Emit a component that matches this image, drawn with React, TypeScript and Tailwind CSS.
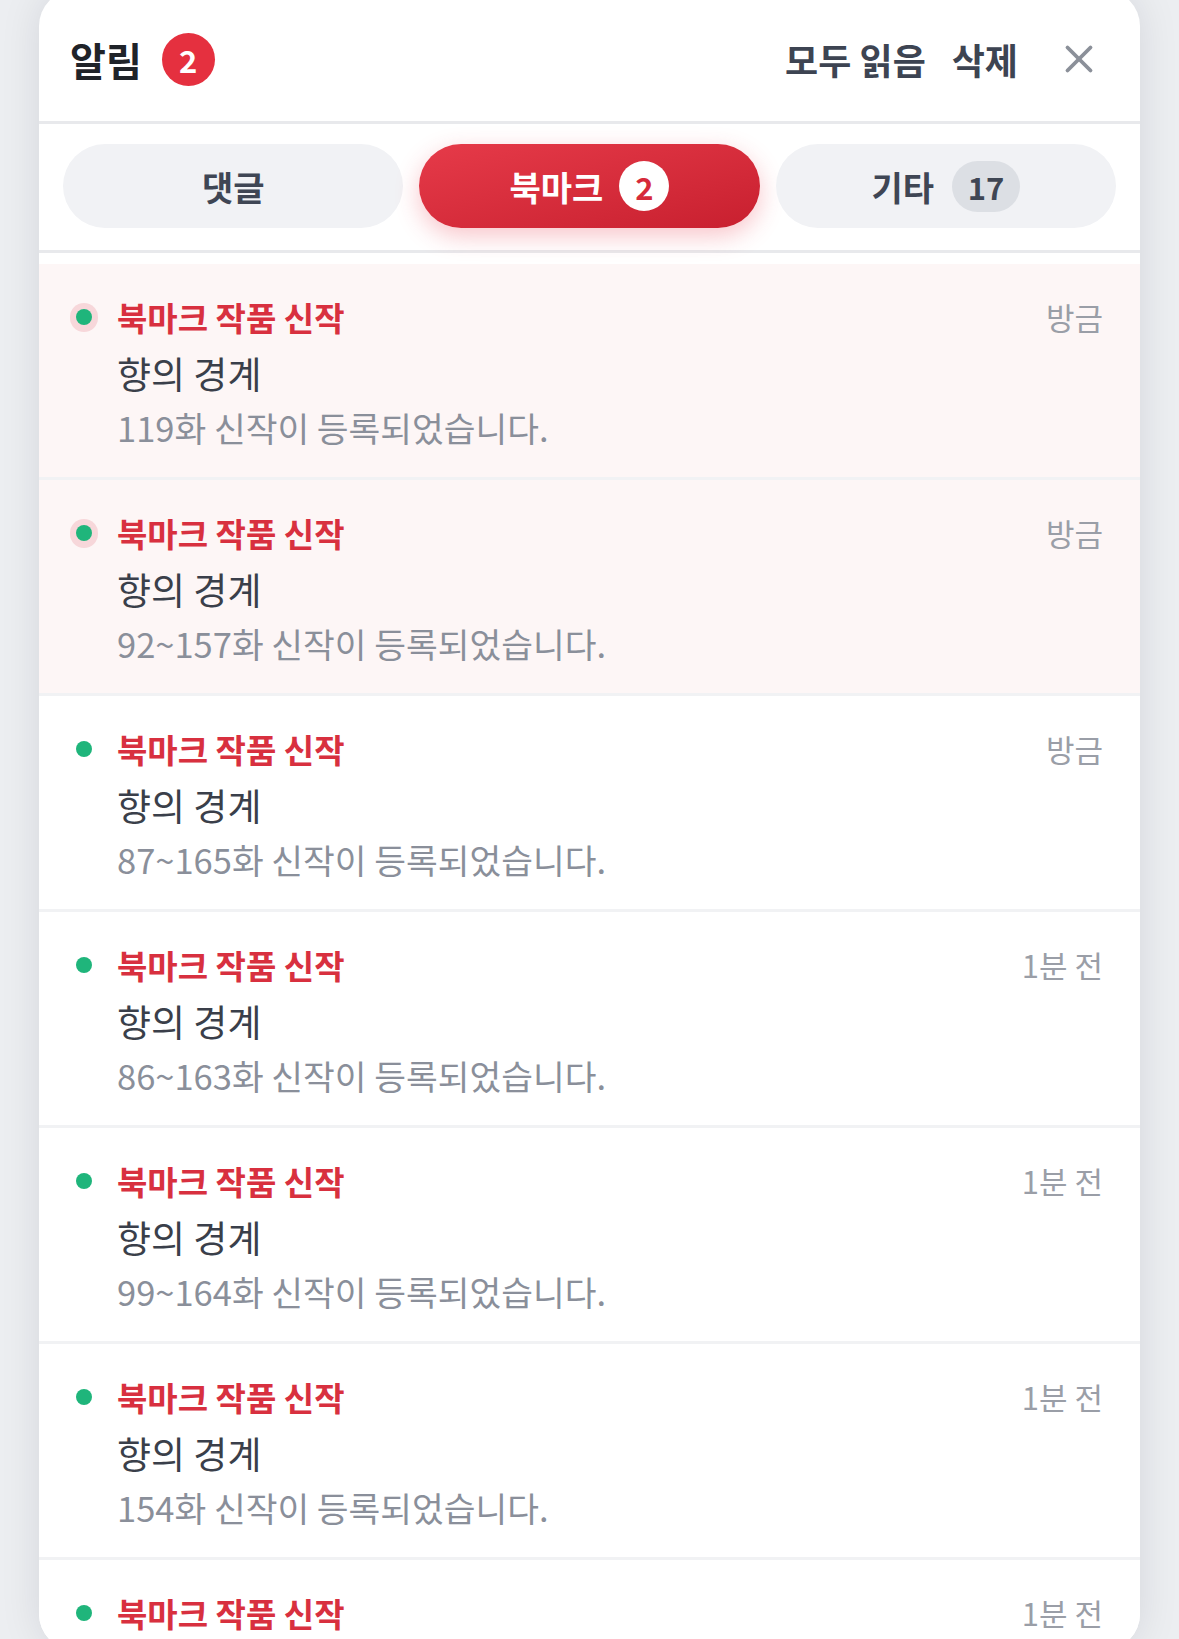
import { X } from "lucide-react";

type Item = {
  unread: boolean;
  time: string;
  message: string;
};

const items: Item[] = [
  { unread: true, time: "방금", message: "119화 신작이 등록되었습니다." },
  { unread: true, time: "방금", message: "92~157화 신작이 등록되었습니다." },
  { unread: false, time: "방금", message: "87~165화 신작이 등록되었습니다." },
  { unread: false, time: "1분 전", message: "86~163화 신작이 등록되었습니다." },
  { unread: false, time: "1분 전", message: "99~164화 신작이 등록되었습니다." },
  { unread: false, time: "1분 전", message: "154화 신작이 등록되었습니다." },
  { unread: false, time: "1분 전", message: "150화 신작이 등록되었습니다." },
];

function NotificationRow({ item }: { item: Item }) {
  return (
    <div
      className={`flex items-start border-b-[3px] border-[#f1f2f4] pl-[31px] pr-[37px] pt-[33px] pb-[28px] ${
        item.unread ? "bg-[#fdf6f6]" : "bg-white"
      }`}
    >
      {/* unread dot */}
      <div className="flex h-[40px] w-[28px] shrink-0 items-center justify-center">
        {item.unread ? (
          <div className="flex h-[29px] w-[29px] items-center justify-center rounded-full bg-[#f7d7da]">
            <div className="h-[16px] w-[16px] rounded-full bg-[#1fb57b]" />
          </div>
        ) : (
          <div className="h-[16px] w-[16px] rounded-full bg-[#1fb57b]" />
        )}
      </div>

      <div className="ml-[19px] flex-1">
        <div className="flex items-center justify-between">
          <span className="text-[33px] font-bold leading-[40px] text-[#d8303f]">
            북마크 작품 신작
          </span>
          <span className="text-[31px] leading-[40px] text-[#9a9ea7]">{item.time}</span>
        </div>
        <div className="mt-[14px] text-[37px] leading-[44px] text-[#3a3f4a]">향의 경계</div>
        <div className="mt-[10px] text-[34.5px] leading-[44px] text-[#8a8f9a]">{item.message}</div>
      </div>
    </div>
  );
}

export default function App() {
  return (
    <div className="h-[1639px] overflow-hidden bg-[#eceef1] font-['Noto_Sans_CJK_KR','Noto_Sans',sans-serif]">
      <div className="mx-[39px] -mt-[10px] h-[1660px] overflow-hidden rounded-[36px] bg-white shadow-[0_0_40px_rgba(15,23,42,0.10)]">
        {/* Header */}
        <div className="flex h-[134px] items-center justify-between border-b-[3px] border-[#e8e9ec] pt-[7px] pl-[31px] pr-[38px]">
          <div className="flex items-center">
            <span className="text-[39px] font-bold leading-none text-[#1f2329]">알림</span>
            <span className="ml-[20px] flex h-[53px] w-[53px] items-center justify-center rounded-full bg-[#e5303f] text-[31px] font-bold leading-none text-white">
              2
            </span>
          </div>
          <div className="flex items-center">
            <button className="text-[36px] font-bold leading-none text-[#3d4452]">모두 읽음</button>
            <button className="ml-[26px] text-[36px] font-bold leading-none text-[#3d4452]">삭제</button>
            <button className="ml-[38px] text-[#8b9099]">
              <X size={46} strokeWidth={2} />
            </button>
          </div>
        </div>

        {/* Tabs */}
        <div className="grid grid-cols-3 gap-[16px] border-b-[3px] border-[#e8e9ec] px-[24px] pt-[20px] pb-[22px]">
          <button className="flex h-[84px] items-center justify-center rounded-full bg-[#f1f2f5] text-[34px] font-bold text-[#3f4654]">
            댓글
          </button>
          <button className="flex h-[84px] items-center justify-center gap-[16px] rounded-full bg-linear-to-br from-[#e63a49] to-[#c81f2f] text-[34px] font-bold text-white shadow-[0_8px_24px_rgba(229,48,63,0.28)]">
            북마크
            <span className="flex h-[50px] w-[50px] items-center justify-center rounded-full bg-white text-[31px] leading-none text-[#d62a3a]">
              2
            </span>
          </button>
          <button className="flex h-[84px] items-center justify-center gap-[18px] rounded-full bg-[#f1f2f5] text-[34px] font-bold text-[#3f4654]">
            기타
            <span className="flex h-[51px] w-[68px] items-center justify-center rounded-full bg-[#dcdfe4] text-[31px] leading-none">
              17
            </span>
          </button>
        </div>

        {/* List */}
        <div className="pt-[11px]">
          {items.map((item, i) => (
            <NotificationRow key={i} item={item} />
          ))}
        </div>
      </div>
    </div>
  );
}
